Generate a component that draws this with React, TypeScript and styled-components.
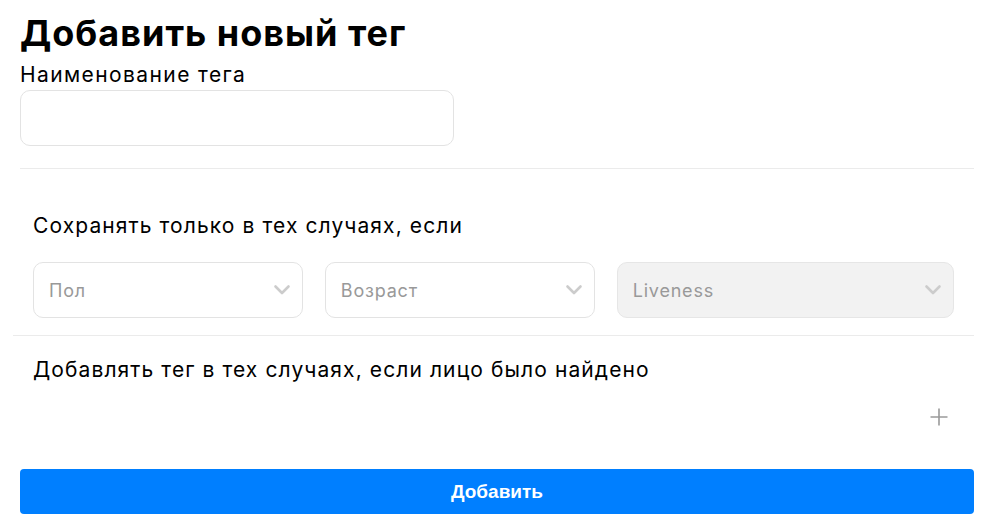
import styled, { createGlobalStyle } from "styled-components";

const GlobalStyle = createGlobalStyle`
  body {
    margin: 0;
    background: #fff;
    font-family: Inter, "Noto Sans", sans-serif;
    color: #000;
  }
`;

const Page = styled.div`
  padding: 13px 16px 0 20px;
`;

const Title = styled.h1`
  margin: 0;
  font-size: 36px;
  line-height: 40px;
  font-weight: 700;
  letter-spacing: 1px;
`;

const Label = styled.div`
  margin-top: 10px;
  font-size: 21px;
  line-height: 24px;
  font-weight: 400;
  letter-spacing: 1.4px;
`;

const TextInput = styled.input`
  display: block;
  box-sizing: border-box;
  margin-top: 3px;
  width: 434px;
  height: 56px;
  border: 1px solid #e3e3e3;
  border-radius: 10px;
  outline: none;
  padding: 0 16px;
  font: inherit;
  font-size: 18px;
`;

const Divider = styled.hr<{ $inset?: number; $top?: number }>`
  margin: ${(p) => p.$top ?? 0}px 0 0 ${(p) => p.$inset ?? 0}px;
  border: none;
  border-top: 1px solid #ebebeb;
`;

const Section = styled.div<{ $top: number }>`
  padding: ${(p) => p.$top}px 0 0 13px;
`;

const SectionTitle = styled.div`
  font-size: 21px;
  line-height: 24px;
  font-weight: 400;
  letter-spacing: 1.1px;
`;

const SelectRow = styled.div`
  display: grid;
  grid-template-columns: 1fr 1fr 1.25fr;
  gap: 22px;
  margin-top: 24px;
  padding-right: 20px;
  margin-bottom: 17px;
`;

const Select = styled.div<{ $disabled?: boolean }>`
  box-sizing: border-box;
  height: 56px;
  display: flex;
  align-items: center;
  justify-content: space-between;
  padding: 0 11px 0 15px;
  border: 1px solid ${(p) => (p.$disabled ? "#e6e6e6" : "#e3e3e3")};
  border-radius: 10px;
  background: ${(p) => (p.$disabled ? "#f2f2f2" : "#fff")};
  color: #999;
  font-size: 18px;
  letter-spacing: 0.8px;
`;

const AddRow = styled.div`
  display: flex;
  justify-content: flex-end;
  padding: 24px 24px 0 0;
  height: 22px;
`;

const PlusButton = styled.button`
  border: none;
  background: none;
  padding: 0;
  width: 22px;
  height: 22px;
  cursor: pointer;
`;

const Submit = styled.button`
  display: block;
  margin-top: 41px;
  width: 100%;
  height: 45px;
  border: none;
  border-radius: 4px;
  background: #007fff;
  color: #fff;
  font-family: "Liberation Sans", Arial, sans-serif;
  font-weight: 700;
  font-size: 19px;
  cursor: pointer;
`;

const Chevron = () => (
  <svg width="18" height="18" viewBox="0 0 18 18" fill="none">
    <path d="M2.5 5.5 9 12l6.5-6.5" stroke="#cccccc" strokeWidth="2.6" strokeLinecap="round" strokeLinejoin="round" />
  </svg>
);

const Plus = () => (
  <svg width="22" height="22" viewBox="0 0 22 22" fill="none">
    <path d="M11 2.5v17M2.5 11h17" stroke="#9a9a9a" strokeWidth="1.6" />
  </svg>
);

export default function App() {
  return (
    <>
      <GlobalStyle />
      <Page>
        <Title>Добавить новый тег</Title>
        <Label>Наименование тега</Label>
        <TextInput />
        <Divider $top={22} />
        <Section $top={45}>
          <SectionTitle>Сохранять только в тех случаях, если</SectionTitle>
          <SelectRow>
            <Select>
              Пол
              <Chevron />
            </Select>
            <Select>
              Возраст
              <Chevron />
            </Select>
            <Select $disabled>
              Liveness
              <Chevron />
            </Select>
          </SelectRow>
        </Section>
        <Divider $inset={-7} />
        <Section $top={22}>
          <SectionTitle>Добавлять тег в тех случаях, если лицо было найдено</SectionTitle>
          <AddRow>
            <PlusButton aria-label="Добавить условие">
              <Plus />
            </PlusButton>
          </AddRow>
        </Section>
        <Submit>Добавить</Submit>
      </Page>
    </>
  );
}
